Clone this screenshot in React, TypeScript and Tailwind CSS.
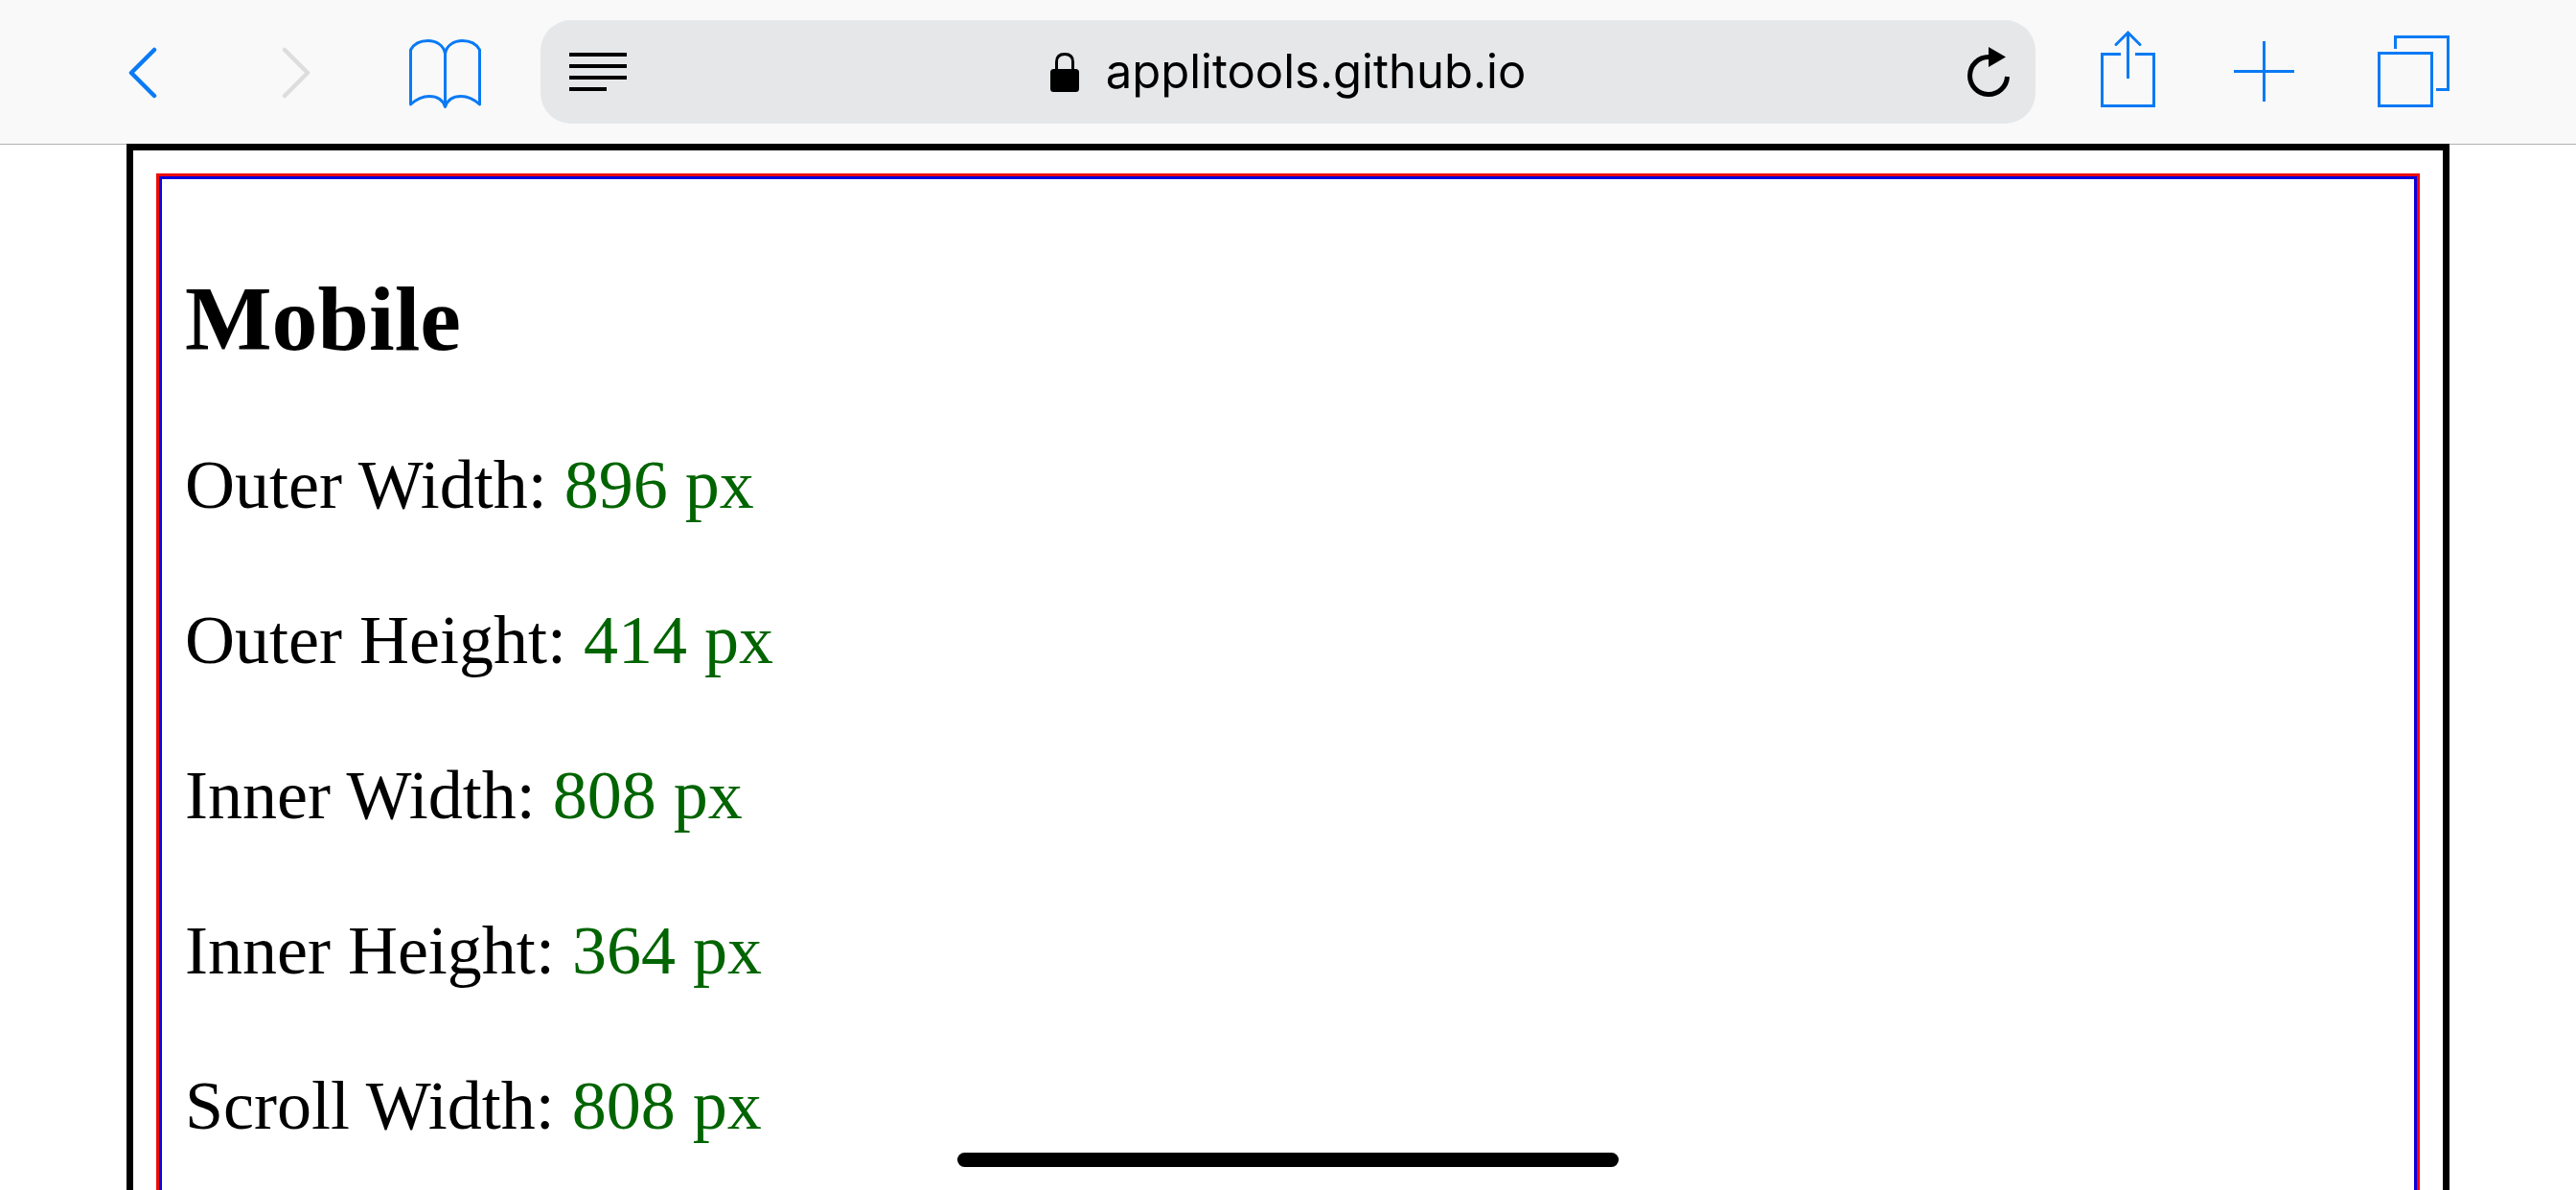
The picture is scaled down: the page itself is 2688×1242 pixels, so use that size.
import React from "react";

const metrics = [
  { label: "Outer Width", value: "896 px" },
  { label: "Outer Height", value: "414 px" },
  { label: "Inner Width", value: "808 px" },
  { label: "Inner Height", value: "364 px" },
  { label: "Scroll Width", value: "808 px" },
];

function BackIcon() {
  return (
    <svg width="32" height="60" viewBox="0 0 32 60" fill="none" stroke="currentColor" strokeWidth="4.5" strokeLinecap="round" strokeLinejoin="round">
      <path d="M29 7 5 31l24 24" />
    </svg>
  );
}

function ForwardIcon() {
  return (
    <svg width="32" height="60" viewBox="0 0 32 60" fill="none" stroke="currentColor" strokeWidth="4.5" strokeLinecap="round" strokeLinejoin="round">
      <path d="M5 7l24 24L5 55" />
    </svg>
  );
}

function BookIcon() {
  return (
    <svg width="78" height="78" viewBox="0 0 78 78" fill="none" stroke="currentColor" strokeWidth="3" strokeLinejoin="round">
      <path d="M38.500 20C37 11 29 6.500 20.500 6.500C12 6.500 5.500 10.500 2.500 16V73C8 68 15 64.500 22 64.500C30 64.500 36 68 38.500 75.500C41 68 47 64.500 55 64.500C62 64.500 69 68 74.500 73V16C71.500 10.500 65 6.500 56.500 6.500C48 6.500 40 11 38.500 20V75.500" />
    </svg>
  );
}

function ReaderIcon() {
  return (
    <svg width="60" height="40" viewBox="0 0 60 40" fill="currentColor">
      <path d="M0 0h60v4H0zM0 12h60v4H0zM0 24h60v4H0zM0 36h39v4H0z" />
    </svg>
  );
}

function LockIcon() {
  return (
    <svg width="30" height="42" viewBox="0 0 30 42">
      <path d="M6.500 20V10.500C6.500 5 10 2.500 15 2.500s8.500 2.500 8.500 8V20" fill="none" stroke="currentColor" strokeWidth="3" />
      <rect y="18" width="30" height="24" rx="3.500" fill="currentColor" />
    </svg>
  );
}

function ReloadIcon() {
  return (
    <svg width="46" height="56" viewBox="0 0 46 56">
      <path d="M23 12.500A19.500 19.500 0 1 0 42.500 33" fill="none" stroke="currentColor" strokeWidth="5" />
      <path d="M23 2v21l18-10.500z" fill="currentColor" />
    </svg>
  );
}

function ShareIcon() {
  return (
    <svg width="60" height="82" viewBox="0 0 60 82" fill="none" stroke="currentColor" strokeWidth="3">
      <path d="M23 25.500H3.500v54h54v-54H38M30.500 51V4" />
      <path d="M18 15.500 30.500 3 43 15.500" strokeLinecap="round" />
    </svg>
  );
}

function PlusIcon() {
  return (
    <svg width="64" height="64" viewBox="0 0 64 64" fill="none" stroke="currentColor" strokeWidth="3">
      <path d="M1 31.500h63M32.500 0v63" />
    </svg>
  );
}

function TabsIcon() {
  return (
    <svg width="76" height="76" viewBox="0 0 76 76" fill="none" stroke="currentColor" strokeWidth="3">
      <path d="M2.500 18.500h55v55h-55zM19.500 14V1.500h55v55H62" />
    </svg>
  );
}

export default function App() {
  return (
    <div className="relative flex h-screen flex-col overflow-hidden bg-white text-black">
      <header className="flex h-[150px] shrink-0 items-center bg-[#f9f9f9] px-[132px] text-[#0a7af5]">
        <nav aria-label="History" className="mr-[60px] flex items-center">
          <button type="button" aria-label="Back" className="mr-32">
            <BackIcon />
          </button>
          <button type="button" aria-label="Forward" disabled className="mr-[102px] text-[#dddddd]">
            <ForwardIcon />
          </button>
          <button type="button" aria-label="Bookmarks">
            <BookIcon />
          </button>
        </nav>
        <div className="flex h-[108px] flex-1 items-center justify-between rounded-[32px] bg-[#e6e7e9] pr-[26px] pl-[30px] text-black">
          <button type="button" aria-label="Reader view">
            <ReaderIcon />
          </button>
          <button type="button" className="flex items-center gap-7 font-['Inter',sans-serif] text-[49px] leading-[60px]">
            <LockIcon />
            <span>applitools.github.io</span>
          </button>
          <button type="button" aria-label="Reload" className="flex w-16 justify-end">
            <ReloadIcon />
          </button>
        </div>
        <div className="ml-[66px] flex items-center">
          <button type="button" aria-label="Share" className="mr-20 pb-1.5">
            <ShareIcon />
          </button>
          <button type="button" aria-label="New tab" className="mr-[86px]">
            <PlusIcon />
          </button>
          <button type="button" aria-label="Tabs">
            <TabsIcon />
          </button>
        </div>
      </header>

      <main className="flex flex-1 flex-col border-t border-[#b2b2b2] px-[132px] font-['Liberation_Serif',serif]">
        <div className="-mt-px flex flex-1 flex-col border-[7px] border-b-0 border-black px-6 pt-6">
          <div className="flex flex-1 flex-col border-[3px] border-b-0 border-[#ee0a0a]">
            <div className="flex-1 border-[3px] border-b-0 border-[#0a00dc] px-6 pt-[91px]">
              <h2 className="mb-[77px] text-[96px] leading-[110px] font-bold">Mobile</h2>
              <div className="flex flex-col gap-20 text-[72px] leading-[82px]">
                {metrics.map((metric) => (
                  <p key={metric.label}>
                    {metric.label}: <span className="text-[#006400]">{metric.value}</span>
                  </p>
                ))}
              </div>
            </div>
          </div>
        </div>
      </main>

      <div className="absolute bottom-6 left-1/2 h-[15px] w-[690px] -translate-x-1/2 rounded-full bg-black" />
    </div>
  );
}
